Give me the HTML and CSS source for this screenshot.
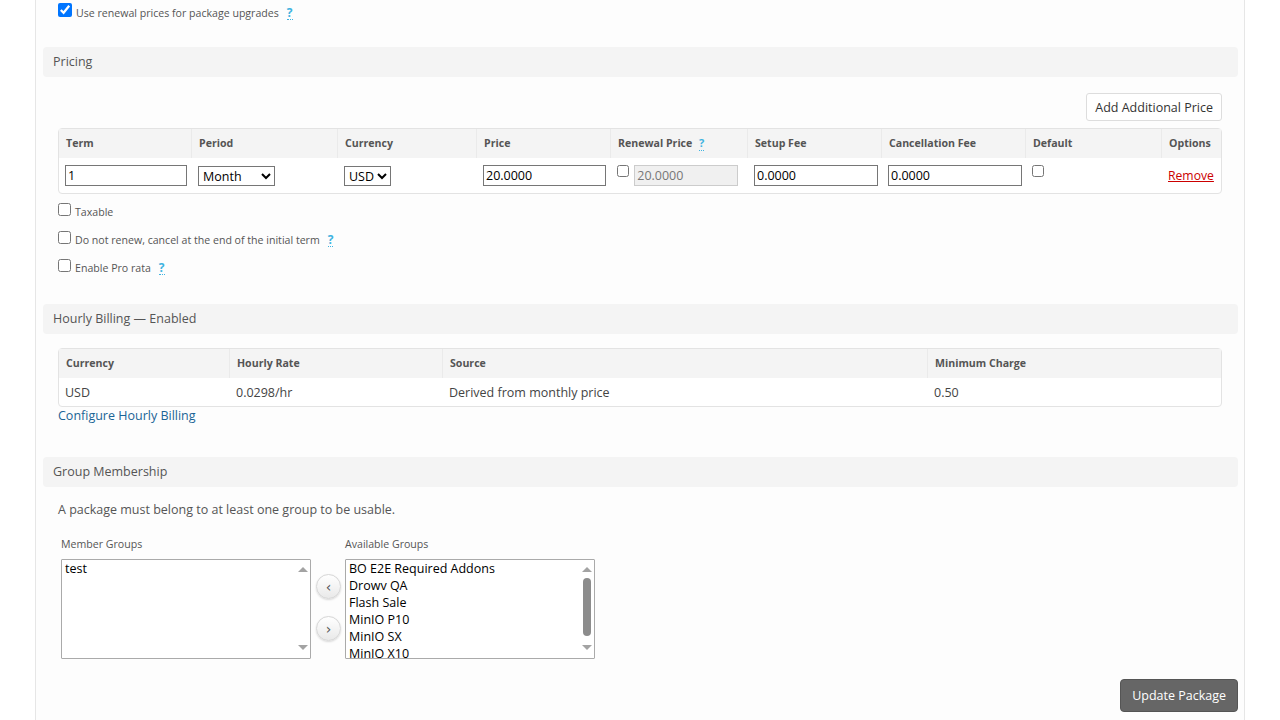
FILE: index.html
```html
<!DOCTYPE html>
<html lang="en">
<head>
    <meta charset="UTF-8">
    <title>Edit Package</title>
    <link rel="stylesheet" href="styles.css">
</head>
<body>
    <div class="page">
        <label class="check-row top-row">
            <input type="checkbox" checked>
            <span>Use renewal prices for package upgrades</span>
            <span class="help">?</span>
        </label>

        <div class="section-title first">Pricing</div>
        <div class="section-body">
            <div class="toolbar">
                <button type="button" class="btn-light">Add Additional Price</button>
            </div>
            <table class="grid pricing">
                <thead>
                    <tr>
                        <th class="c-term">Term</th>
                        <th class="c-period">Period</th>
                        <th class="c-currency">Currency</th>
                        <th class="c-price">Price</th>
                        <th class="c-renew">Renewal Price <span class="help">?</span></th>
                        <th class="c-setup">Setup Fee</th>
                        <th class="c-cancel">Cancellation Fee</th>
                        <th class="c-default">Default</th>
                        <th class="c-options">Options</th>
                    </tr>
                </thead>
                <tbody>
                    <tr>
                        <td><input type="text" class="field w-term" value="1"></td>
                        <td>
                            <select class="dropdown w-period">
                                <option>Month</option>
                                <option>Year</option>
                            </select>
                        </td>
                        <td class="currency-cell">
                            <select class="dropdown w-currency">
                                <option>USD</option>
                            </select>
                        </td>
                        <td><input type="text" class="field w-price" value="20.0000"></td>
                        <td class="renew-cell">
                            <input type="checkbox" class="box">
                            <input type="text" class="field w-renew" value="20.0000" disabled>
                        </td>
                        <td><input type="text" class="field w-fee" value="0.0000"></td>
                        <td><input type="text" class="field w-cancel" value="0.0000"></td>
                        <td class="default-cell"><input type="checkbox" class="box"></td>
                        <td class="options-cell"><a href="#" class="remove">Remove</a></td>
                    </tr>
                </tbody>
            </table>

            <div class="options-list">
                <label class="check-row"><input type="checkbox"><span>Taxable</span></label>
                <label class="check-row"><input type="checkbox"><span>Do not renew, cancel at the end of the initial term</span><span class="help">?</span></label>
                <label class="check-row"><input type="checkbox"><span>Enable Pro rata</span><span class="help">?</span></label>
            </div>
        </div>

        <div class="section-title hourly-title">Hourly Billing &mdash; Enabled</div>
        <div class="section-body">
            <table class="grid hourly">
                <thead>
                    <tr>
                        <th class="h-currency">Currency</th>
                        <th class="h-rate">Hourly Rate</th>
                        <th class="h-source">Source</th>
                        <th>Minimum Charge</th>
                    </tr>
                </thead>
                <tbody>
                    <tr>
                        <td>USD</td>
                        <td>0.0298/hr</td>
                        <td>Derived from monthly price</td>
                        <td>0.50</td>
                    </tr>
                </tbody>
            </table>
            <a href="#" class="link">Configure Hourly Billing</a>
        </div>

        <div class="section-title groups-title">Group Membership</div>
        <div class="section-body">
            <p class="note">A package must belong to at least one group to be usable.</p>
            <div class="groups">
                <div class="group-col">
                    <div class="group-label">Member Groups</div>
                    <div class="listbox-wrap">
                        <select multiple class="listbox">
                            <option>test</option>
                        </select>
                        <div class="scrollbar">
                            <span class="arrow-up"></span>
                            <span class="arrow-down"></span>
                        </div>
                    </div>
                </div>
                <div class="movers">
                    <button type="button" class="round-btn">&lsaquo;</button>
                    <button type="button" class="round-btn">&rsaquo;</button>
                </div>
                <div class="group-col">
                    <div class="group-label">Available Groups</div>
                    <div class="listbox-wrap">
                        <select multiple class="listbox">
                            <option>BO E2E Required Addons</option>
                            <option>Drowv QA</option>
                            <option>Flash Sale</option>
                            <option>MinIO P10</option>
                            <option>MinIO SX</option>
                            <option>MinIO X10</option>
                            <option>MinIO X20</option>
                            <option>Promo</option>
                            <option>Storage</option>
                        </select>
                        <div class="scrollbar">
                            <span class="arrow-up"></span>
                            <span class="thumb"></span>
                            <span class="arrow-down"></span>
                        </div>
                    </div>
                </div>
            </div>
        </div>

        <div class="actions">
            <button type="submit" class="btn-dark">Update Package</button>
        </div>
    </div>
</body>
</html>
```

FILE: styles.css
```css
:root {
    --text-color: #555555;
    --header-bg: #f4f4f4;
    --line-color: #e3e3e3;
    --help-color: #3fb3e0;
}

* {
    box-sizing: border-box;
}

body {
    margin: 0;
    background-color: #ffffff;
    font-family: "Open Sans", "Liberation Sans", sans-serif;
    color: var(--text-color);
    font-size: 12.5px;
    overflow: hidden;
}

.page {
    margin-left: 35px;
    width: 1210px;
    min-height: 720px;
    background-color: #fdfdfd;
    border-left: 1px solid #e6e6e6;
    border-right: 1px solid #e6e6e6;
    padding: 0 6px 0 7px;
}

.check-row {
    display: flex;
    align-items: center;
    font-size: 10.6px;
    color: var(--text-color);
    height: 28px;
    padding-left: 15px;
}

.check-row input {
    margin: 0 4px 0 0;
    width: 13px;
    height: 13px;
    position: relative;
    top: -3px;
}

.top-row {
    height: 22px;
}

.top-row span {
    padding-top: 3px;
}

.top-row input {
    width: 14px;
    height: 14px;
    top: -1px;
}

.help {
    color: var(--help-color);
    font-weight: 700;
    font-size: 12px;
    margin-left: 8px;
    border-bottom: 1px dotted var(--help-color);
    line-height: 13px;
}

.section-title {
    background-color: var(--header-bg);
    border-radius: 4px;
    height: 30px;
    line-height: 30px;
    padding-left: 10px;
    font-size: 12.5px;
    color: var(--text-color);
    margin-top: 25px;
}

.hourly-title {
    margin-top: 22px;
}

.groups-title {
    margin-top: 33px;
}

.section-body {
    padding: 0 16px 0 15px;
}

.toolbar {
    display: flex;
    justify-content: flex-end;
    padding-top: 16px;
    margin-bottom: 7px;
}

.btn-light {
    font-family: inherit;
    font-size: 12.5px;
    color: #333333;
    background-color: #ffffff;
    border: 1px solid #dddddd;
    border-radius: 3px;
    height: 28px;
    padding: 0 8px;
}

.grid {
    width: 100%;
    table-layout: fixed;
    border-collapse: separate;
    border-spacing: 0;
    border: 1px solid var(--line-color);
    border-radius: 4px;
    background-color: #ffffff;
}

.grid th {
    background-color: var(--header-bg);
    font-size: 10.6px;
    font-weight: 700;
    color: var(--text-color);
    text-align: left;
    height: 29px;
    padding: 0 7px 1px;
    border-right: 1px solid #eaeaea;
    white-space: nowrap;
}

.grid th:last-child {
    border-right: none;
}

.grid td {
    padding: 0 6px;
    vertical-align: middle;
    white-space: nowrap;
}

.pricing td {
    height: 35px;
}

.c-term { width: 133px; }
.c-period { width: 146px; }
.c-currency { width: 139px; }
.c-price { width: 134px; }
.c-renew { width: 137px; }
.c-setup { width: 134px; }
.c-cancel { width: 144px; }
.c-default { width: 136px; }

.pricing .help {
    font-size: 11px;
    margin-left: 4px;
}

.field {
    font-family: inherit;
    font-size: 12.5px;
    color: #000000;
    height: 21px;
    border: 1px solid #767676;
    border-radius: 0;
    padding: 0 2px;
    background-color: #ffffff;
}

.field:disabled {
    background-color: #f0f0f0;
    border-color: #cccccc;
    color: #777777;
}

.w-term { width: 122px; }
.w-price { width: 123px; }
.w-renew { width: 104px; }
.w-fee { width: 124px; }
.w-cancel { width: 134px; }

.currency-cell {
    padding-left: 8px;
}

.default-cell,
.options-cell {
    padding-left: 7px;
}

.box {
    width: 12px;
    height: 12px;
    margin: 0 2px 0 0;
    position: relative;
    top: -3px;
}

.renew-cell {
    padding-left: 5px;
}

.dropdown {
    font-family: inherit;
    font-size: 12.5px;
    color: #000000;
    height: 20px;
    border: 1px solid #767676;
    border-radius: 0;
    background-color: #ffffff;
    padding: 0;
}

.w-period { width: 77px; }
.w-currency { width: 47px; }

.remove {
    color: #cc0000;
    font-size: 12.2px;
}

.options-list {
    margin-top: 4px;
}

.options-list .check-row {
    padding-left: 0;
}

.hourly {
    margin-top: 14px;
}

.hourly td {
    height: 28px;
    font-size: 12.5px;
    color: #444444;
}

.h-currency { width: 171px; }
.h-rate { width: 213px; }
.h-source { width: 485px; }

.link {
    display: inline-block;
    color: #1a6496;
    text-decoration: none;
    font-size: 12.5px;
}

.note {
    margin: 14px 0 0;
    font-size: 12.5px;
    color: var(--text-color);
}

.groups {
    display: flex;
    margin-top: 19px;
    padding-left: 3px;
}

.group-label {
    font-size: 10.6px;
    color: var(--text-color);
    margin-bottom: 8px;
}

.listbox-wrap {
    position: relative;
    width: 250px;
    height: 100px;
}

.listbox {
    display: block;
    width: 250px;
    height: 100px;
    border: 1px solid #aaaaaa;
    border-radius: 1px;
    font-family: inherit;
    font-size: 12.5px;
    color: #000000;
    padding: 0;
    overflow-y: hidden;
    background-color: #ffffff;
}

.listbox option {
    padding: 0 3px;
}

.scrollbar {
    position: absolute;
    top: 1px;
    right: 1px;
    bottom: 1px;
    width: 15px;
    background-color: #ffffff;
    display: flex;
    flex-direction: column;
    align-items: center;
    padding: 7px 0 8px;
}

.arrow-up {
    width: 0;
    height: 0;
    border-left: 5px solid transparent;
    border-right: 5px solid transparent;
    border-bottom: 5px solid #a3a3a3;
}

.arrow-down {
    width: 0;
    height: 0;
    margin-top: auto;
    border-left: 5px solid transparent;
    border-right: 5px solid transparent;
    border-top: 5px solid #a3a3a3;
}

.thumb {
    width: 8px;
    height: 58px;
    margin-top: 6px;
    border-radius: 4px;
    background-color: #8c8c8c;
}

.movers {
    display: flex;
    flex-direction: column;
    gap: 17px;
    padding: 37px 4px 0 5px;
}

.round-btn {
    width: 25px;
    height: 25px;
    border-radius: 50%;
    border: 1px solid #d6d6d6;
    background: linear-gradient(#ffffff, #e9e9e9);
    box-shadow: 0 1px 2px rgba(0, 0, 0, 0.15);
    color: #555555;
    font-size: 14px;
    line-height: 20px;
    padding: 0;
    font-family: "DejaVu Sans", sans-serif;
}

.actions {
    display: flex;
    justify-content: flex-end;
    margin-top: 20px;
}

.btn-dark {
    font-family: inherit;
    font-size: 12.5px;
    color: #ffffff;
    background-color: #666666;
    border: 1px solid #555555;
    border-radius: 4px;
    height: 33px;
    padding: 0 11px;
}
```
